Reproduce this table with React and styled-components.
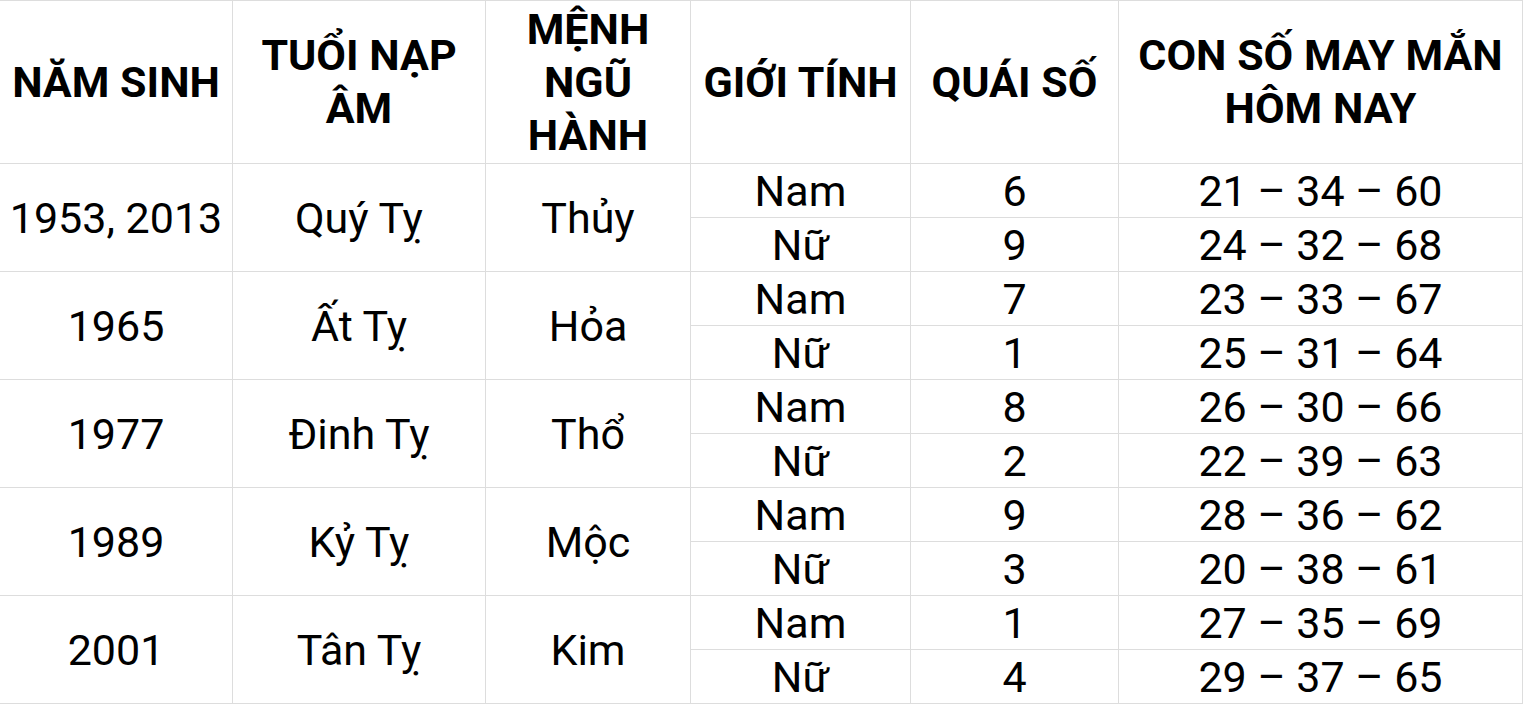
import React from 'react'
import styled, { createGlobalStyle } from 'styled-components'

const GlobalStyle = createGlobalStyle`
  html, body {
    margin: 0;
    padding: 0;
    background: #ffffff;
  }
  body {
    font-family: Roboto, "Noto Sans", "Liberation Sans", sans-serif;
    color: #000;
  }
`

const Table = styled.table`
  table-layout: fixed;
  border-collapse: separate;
  border-spacing: 0;
  width: 1523px;
  border-top: 1px solid #dddddd;
`

const HeadCell = styled.th`
  box-sizing: border-box;
  height: 163px;
  padding: 0 2px;
  border-right: 1px solid #dddddd;
  border-bottom: 1px solid #dddddd;
  font-size: 43px;
  font-weight: 700;
  line-height: 53px;
  text-align: center;
  vertical-align: middle;
`

const Cell = styled.td`
  box-sizing: border-box;
  height: 54px;
  padding: 0;
  border-right: 1px solid #dddddd;
  border-bottom: 1px solid #dddddd;
  font-size: 43px;
  font-weight: 400;
  line-height: 50px;
  text-align: center;
  vertical-align: middle;
  white-space: nowrap;
`

const columns = [233, 253, 205, 220, 208, 404]

const headers = ['NĂM SINH', 'TUỔI NẠP ÂM', 'MỆNH NGŨ HÀNH', 'GIỚI TÍNH', 'QUÁI SỐ', 'CON SỐ MAY MẮN HÔM NAY']

const groups = [
  { year: '1953, 2013', age: 'Quý Tỵ', element: 'Thủy', rows: [['Nam', '6', '21 – 34 – 60'], ['Nữ', '9', '24 – 32 – 68']] },
  { year: '1965', age: 'Ất Tỵ', element: 'Hỏa', rows: [['Nam', '7', '23 – 33 – 67'], ['Nữ', '1', '25 – 31 – 64']] },
  { year: '1977', age: 'Đinh Tỵ', element: 'Thổ', rows: [['Nam', '8', '26 – 30 – 66'], ['Nữ', '2', '22 – 39 – 63']] },
  { year: '1989', age: 'Kỷ Tỵ', element: 'Mộc', rows: [['Nam', '9', '28 – 36 – 62'], ['Nữ', '3', '20 – 38 – 61']] },
  { year: '2001', age: 'Tân Tỵ', element: 'Kim', rows: [['Nam', '1', '27 – 35 – 69'], ['Nữ', '4', '29 – 37 – 65']] },
]

function App() {
  return (
    <>
      <GlobalStyle />
      <Table>
        <colgroup>
          {columns.map((w, i) => <col key={i} style={{ width: w }} />)}
        </colgroup>
        <thead>
          <tr>
            {headers.map((h) => <HeadCell key={h}>{h}</HeadCell>)}
          </tr>
        </thead>
        <tbody>
          {groups.map((g) =>
            g.rows.map((r, i) => (
              <tr key={g.year + i}>
                {i === 0 && (
                  <>
                    <Cell rowSpan={2}>{g.year}</Cell>
                    <Cell rowSpan={2}>{g.age}</Cell>
                    <Cell rowSpan={2}>{g.element}</Cell>
                  </>
                )}
                <Cell>{r[0]}</Cell>
                <Cell>{r[1]}</Cell>
                <Cell>{r[2]}</Cell>
              </tr>
            ))
          )}
        </tbody>
      </Table>
    </>
  )
}

export default App
